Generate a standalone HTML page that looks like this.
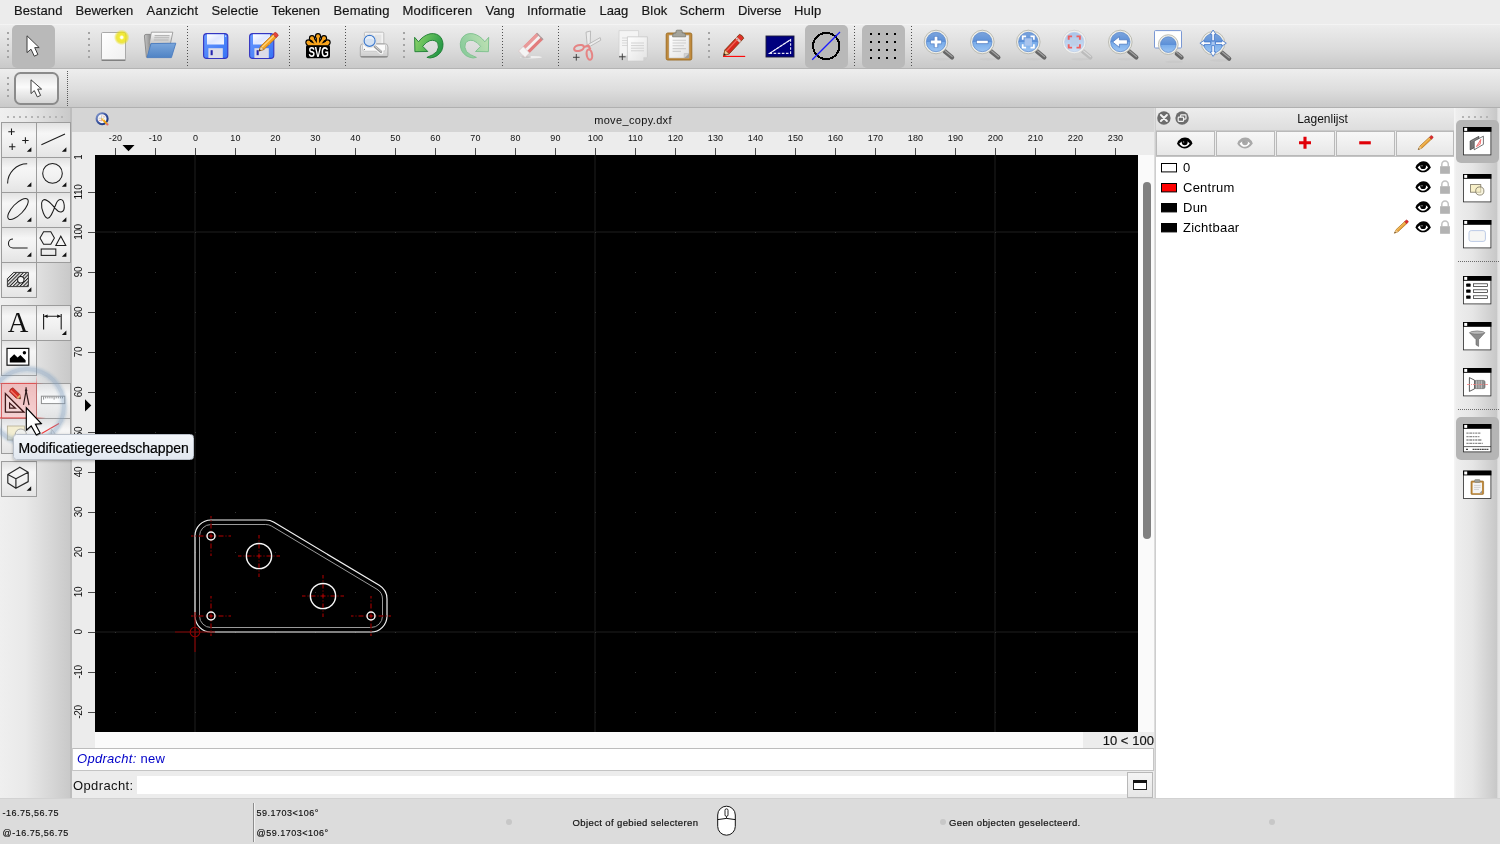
<!DOCTYPE html>
<html>
<head>
<meta charset="utf-8">
<title>move_copy.dxf</title>
<style>
*{box-sizing:border-box;margin:0;padding:0}
html,body{width:1500px;height:844px;overflow:hidden;background:#ececec;font-family:"Liberation Sans",sans-serif;color:#000}
#app{position:relative;width:1500px;height:844px;overflow:hidden;will-change:transform}
#app *{position:absolute}
#app i,#app b{font-style:normal;font-weight:normal}
/* menu */
#menubar{left:0;top:0;width:1500px;height:24px;background:#ececec}
#menubar span{top:2px;font-size:13px;line-height:17px;white-space:nowrap;color:#161616;-webkit-text-stroke:.18px #161616}
/* toolbars */
#tb1{left:0;top:24px;width:1500px;height:45px;background:linear-gradient(#f7f7f7 0,#ececec 1.5px,#dcdcdc 55%,#c9c9c9 100%);border-bottom:1px solid #b4b4b4}
#tb2{left:0;top:69px;width:1500px;height:39px;background:linear-gradient(#eeeeee 0,#dddddd 55%,#c9c9c9 100%);border-bottom:1px solid #b0b0b0}
.hd{width:2px;height:2px;background:#a4a4a4}
.vsep{width:1px;background-image:linear-gradient(#5a5a5a 50%,rgba(0,0,0,0) 50%);background-size:1px 2px}

.vsep3{width:1px;background-image:linear-gradient(#4e4e4e 33.4%,rgba(0,0,0,0) 33.4%);background-size:1px 3px}
.sel{background:#b9b9b9;border-radius:5px}
/* left tools */
#left{left:0;top:108px;width:72px;height:690px;background:linear-gradient(90deg,#efefef 0%,#e9e9e9 35%,#c9c9c9 70px,#bdbdbd 70.5px,#bdbdbd 100%)}
.tbtn{width:36px;height:36px;background:linear-gradient(#e2e2e2 0%,#f6f6f6 30%,#f0f0f0 60%,#e4e4e4 100%);border:1px solid #9c9c9c}
/* main */
#tabbar{left:72px;top:108px;width:1082px;height:24px;background:#d5d5d5}
#tabtitle{left:0;width:1122px;top:5px;text-align:center;font-size:11px;line-height:14px;color:#111;letter-spacing:.35px}
#hruler{left:72px;top:132px;width:1082px;height:23px;background:#ececec;overflow:hidden}
#vruler{left:72px;top:155px;width:23px;height:593px;background:#ececec;overflow:hidden}
.ht{width:1px;height:7px;top:16px;background:#4a4a4a}
.hl{width:41px;text-align:center;top:0;font-size:9px;line-height:12px;color:#111;letter-spacing:.2px}
.vt{height:1px;width:7px;left:16px;background:#4a4a4a}
.vl{left:-13.8px;width:41px;height:12px;text-align:center;font-size:10px;line-height:12px;color:#111;transform:rotate(-90deg);transform-origin:50% 50%;letter-spacing:-.4px}
#canvas{left:95px;top:155px;width:1043px;height:577px;background:#000;overflow:hidden}
#vscroll{left:1138px;top:155px;width:16px;height:577px;background:#fafafa}
#hscroll{left:95px;top:732px;width:1059px;height:16px;background:#fafafa}
#zoomlbl{left:1083px;top:732px;width:71px;height:16px;background:#ececec;font-size:13px;line-height:16px;text-align:right;padding-right:0;padding-top:.8px;color:#111;letter-spacing:.05px;-webkit-text-stroke:.15px #111}
#cmdhist{left:72px;top:748px;width:1082px;height:23px;background:#fff;border-top:1px solid #bcbcbc;border-bottom:1px solid #c4c4c4;border-left:1px solid #d0d0d0;border-right:1px solid #c6c6c6}
#cmdhist span{left:4px;top:1.6px;font-size:13px;line-height:16px;color:#0000c8;white-space:nowrap;letter-spacing:.28px}
#cmdhist i{font-style:italic!important;position:static!important}
#cmdrow{left:72px;top:771px;width:1082px;height:27px;background:#ececec}
#cmdlabel{left:1px;top:6.7px;font-size:13px;line-height:16px;color:#111;letter-spacing:.38px}
#cmdinput{left:65px;top:5px;width:990px;height:18px;background:#fff}
#cmdbtn{left:1055px;top:1px;width:26px;height:26px;border:1px solid #b8b8b8;background:linear-gradient(#f4f4f4,#e6e6e6)}
#status{left:0;top:798px;width:1500px;height:46px;background:#dcdcdc;border-top:1px solid #d2d2d2}
#status .sc{font-size:9px;line-height:12px;color:#111;white-space:nowrap;letter-spacing:.5px;-webkit-text-stroke:.15px #111}
#status .st{font-size:9.5px;line-height:12px;color:#111;white-space:nowrap;letter-spacing:.375px;-webkit-text-stroke:.18px #111}
#splitv{left:1154px;top:108px;width:2px;height:690px;background:linear-gradient(90deg,#e4e4e4,#c6c6c6)}
#right{left:1156px;top:156px;width:298px;height:642px;background:#fff;border-top:1px solid #c4c4c4}
#rhead{left:1156px;top:108px;width:298px;height:23px;background:linear-gradient(#ededed,#dedede);border-bottom:1px solid #c9c9c9}
#rhead span{left:0;width:333px;text-align:center;top:4.2px;font-size:12px;line-height:15px;color:#111;letter-spacing:0}
.lbtn{top:131px;height:25px;border:1px solid #b9b9b9;background:linear-gradient(#f7f7f7,#e7e7e7)}
.lname{left:1183px;font-size:13px;line-height:16px;color:#000;white-space:nowrap;letter-spacing:.25px}
.hsep{height:1px;background-image:linear-gradient(90deg,#6a6a6a 50%,rgba(0,0,0,0) 50%);background-size:2px 1px}
#rtool{left:1454px;top:108px;width:46px;height:690px;background:linear-gradient(90deg,#f4f4f4 0,#f4f4f4 1px,#eeeeee 2px,#e6e6e6 40%,#c8c8c8 42.5px,#e2e2e2 44px,#e6e6e6 100%)}
</style>
</head>
<body>
<div id="app">

<!-- MENUBAR -->
<div id="menubar">
<span style="left:14px;letter-spacing:0.11px">Bestand</span>
<span style="left:75.5px;letter-spacing:0px">Bewerken</span>
<span style="left:146.5px;letter-spacing:0.26px">Aanzicht</span>
<span style="left:211.5px;letter-spacing:0.09px">Selectie</span>
<span style="left:271.5px;letter-spacing:-0.1px">Tekenen</span>
<span style="left:333.5px;letter-spacing:0.14px">Bemating</span>
<span style="left:402.5px;letter-spacing:0.25px">Modificeren</span>
<span style="left:485.5px;letter-spacing:-0.05px">Vang</span>
<span style="left:527px;letter-spacing:0.12px">Informatie</span>
<span style="left:599.5px;letter-spacing:-0.05px">Laag</span>
<span style="left:641.5px;letter-spacing:0.17px">Blok</span>
<span style="left:679.5px;letter-spacing:0.12px">Scherm</span>
<span style="left:738px;letter-spacing:-0.08px">Diverse</span>
<span style="left:794px;letter-spacing:0.17px">Hulp</span>
</div>

<!-- TOOLBARS -->
<div id="tb1"></div><div id="tb2"></div>
<div class="sel" style="left:12px;top:25px;width:43px;height:43px"></div>
<div class="sel" style="left:805px;top:25px;width:43px;height:43px"></div>
<div class="sel" style="left:862px;top:25px;width:43px;height:43px"></div>
<i class="hd" style="left:7px;top:32px"></i>
<i class="hd" style="left:7px;top:38px"></i>
<i class="hd" style="left:7px;top:44px"></i>
<i class="hd" style="left:7px;top:50px"></i>
<i class="hd" style="left:7px;top:56px"></i>
<i class="hd" style="left:88px;top:32px"></i>
<i class="hd" style="left:88px;top:38px"></i>
<i class="hd" style="left:88px;top:44px"></i>
<i class="hd" style="left:88px;top:50px"></i>
<i class="hd" style="left:88px;top:56px"></i>
<i class="hd" style="left:403px;top:32px"></i>
<i class="hd" style="left:403px;top:38px"></i>
<i class="hd" style="left:403px;top:44px"></i>
<i class="hd" style="left:403px;top:50px"></i>
<i class="hd" style="left:403px;top:56px"></i>
<i class="hd" style="left:708px;top:32px"></i>
<i class="hd" style="left:708px;top:38px"></i>
<i class="hd" style="left:708px;top:44px"></i>
<i class="hd" style="left:708px;top:50px"></i>
<i class="hd" style="left:708px;top:56px"></i>
<i class="hd" style="left:7px;top:77px"></i>
<i class="hd" style="left:7px;top:83px"></i>
<i class="hd" style="left:7px;top:89px"></i>
<i class="hd" style="left:7px;top:95px"></i>
<i class="vsep3" style="left:187px;top:26px;height:41px"></i>
<i class="vsep3" style="left:289px;top:26px;height:41px"></i>
<i class="vsep3" style="left:345px;top:26px;height:41px"></i>
<i class="vsep3" style="left:502px;top:26px;height:41px"></i>
<i class="vsep3" style="left:558px;top:26px;height:41px"></i>
<i class="vsep3" style="left:854px;top:26px;height:41px"></i>
<i class="vsep3" style="left:911px;top:26px;height:41px"></i>
<i class="vsep" style="left:67px;top:71px;height:35px"></i>
<div style="left:14px;top:72px;width:45px;height:33px;border:2px solid #8b8b8b;border-radius:6.5px;background:linear-gradient(#e4e4e4 0%,#fbfbfb 45%,#efefef 60%,#d6d6d6 100%)"></div>
<svg id="tbsvg" width="1500" height="84" viewBox="0 24 1500 84" style="left:0;top:24px"><defs>
<linearGradient id="gPaper" x1="0" y1="0" x2="1" y2="1"><stop offset="0" stop-color="#ffffff"/><stop offset="1" stop-color="#f0f0f0"/></linearGradient>
<radialGradient id="gGlow"><stop offset="0" stop-color="#ffffff"/><stop offset=".14" stop-color="#fffff0"/><stop offset=".32" stop-color="#f4ec34"/><stop offset=".66" stop-color="#eae018" stop-opacity=".8"/><stop offset="1" stop-color="#e4da00" stop-opacity="0"/></radialGradient>
<linearGradient id="gFback" x1="0" y1="0" x2="1" y2="0"><stop offset="0" stop-color="#c6c6c6"/><stop offset="1" stop-color="#868686"/></linearGradient><linearGradient id="gFpap" x1="0" y1="0" x2="0" y2="1"><stop offset="0" stop-color="#ffffff"/><stop offset=".35" stop-color="#e8e8e8"/><stop offset="1" stop-color="#c4c4c4"/></linearGradient><linearGradient id="gFold" x1="0" y1="0" x2="0" y2="1"><stop offset="0" stop-color="#7ba7dc"/><stop offset="1" stop-color="#4f83c4"/></linearGradient>
<linearGradient id="gSave" x1="0" y1="0" x2="1" y2="1"><stop offset="0" stop-color="#6a9aff"/><stop offset="1" stop-color="#3672f4"/></linearGradient>
<linearGradient id="gLbl" x1="0" y1="0" x2="1" y2="1"><stop offset="0" stop-color="#ffffff"/><stop offset=".5" stop-color="#dfe7ff"/><stop offset="1" stop-color="#f4f6ff"/></linearGradient>
<linearGradient id="gLens" x1="0" y1="0" x2="0" y2="1"><stop offset="0" stop-color="#7ba4dc"/><stop offset=".5" stop-color="#5c90d8"/><stop offset=".52" stop-color="#78acea"/><stop offset="1" stop-color="#9cc4f2"/></linearGradient>
<linearGradient id="gLensP" x1="0" y1="0" x2="0" y2="1"><stop offset="0" stop-color="#a9c3e8"/><stop offset="1" stop-color="#cfe0f5"/></linearGradient>
<linearGradient id="gUndo" x1="0" y1="0" x2="1" y2=".4"><stop offset="0" stop-color="#93d46c"/><stop offset=".5" stop-color="#5cba58"/><stop offset="1" stop-color="#2a9a48"/></linearGradient>
<linearGradient id="gRedo" x1="0" y1="0" x2="1" y2=".4"><stop offset="0" stop-color="#c2e2b4"/><stop offset=".5" stop-color="#a8d8aa"/><stop offset="1" stop-color="#8ccc9c"/></linearGradient>
<linearGradient id="gPrn" x1="0" y1="0" x2="0" y2="1"><stop offset="0" stop-color="#f4f4f4"/><stop offset="1" stop-color="#c9c9c9"/></linearGradient>
<linearGradient id="gClip" x1="0" y1="0" x2="1" y2="1"><stop offset="0" stop-color="#ffffff"/><stop offset="1" stop-color="#e2e2e2"/></linearGradient>
</defs><path d="M27 35.8V52.6L31 49.2L34.3 56.2L37.9 54.5L34.7 47.6H39.2Z" fill="#fff" stroke="#3c3c3c" stroke-width="1" stroke-linejoin="round"/><path d="M31 79.8V93.6L34.3 90.6L37.3 96.9L40.6 95.4L37.7 89.1H41.6Z" fill="#fff" stroke="#3c3c3c" stroke-width="1" stroke-linejoin="round"/><rect x="101.5" y="32.5" width="24" height="27.5" rx="1.2" fill="url(#gPaper)" stroke="#a9a9a9"/><path d="M101.6 60.3H125.4" stroke="#7e7e7e" stroke-width="1.3"/><circle cx="121.7" cy="37.4" r="7.8" fill="url(#gGlow)"/><path d="M144.4 36Q144.4 34.4 146 34.4H150.4L151.4 35.6V55.6L146.4 57.2Z" fill="url(#gFback)" stroke="#7c7c7c" stroke-width=".8"/><path d="M151.4 32.2H172.8L170.4 44H149.2Z" fill="url(#gFpap)" stroke="#8e8e8e" stroke-width=".8"/><path d="M154.6 35.6H169.6M154.2 37.8H169.2M153.8 40H168.6" stroke="#b4b4b4" stroke-width="1.1"/><path d="M151 43.6L175.8 43.2L171.4 57.6H147Z" fill="url(#gFold)" stroke="#4a7cbf" stroke-width=".9" stroke-linejoin="round"/><rect x="203.6" y="33.6" width="24.2" height="24.8" rx="3.2" fill="url(#gSave)" stroke="#3434c0" stroke-width="1.1"/><rect x="207" y="34.3" width="17" height="10.2" fill="url(#gLbl)"/><rect x="208.4" y="48.2" width="14.4" height="9.8" fill="#dcdce8"/><rect x="210.6" y="50.2" width="2.1" height="5" fill="#2424b0"/><rect x="225" y="35.5" width="1.2" height="1.2" fill="#dfe6ff"/><rect x="249.6" y="33.6" width="24.2" height="24.8" rx="3.2" fill="url(#gSave)" stroke="#3434c0" stroke-width="1.1"/><rect x="253" y="34.3" width="17" height="10.2" fill="url(#gLbl)"/><rect x="254.4" y="48.2" width="14.4" height="9.8" fill="#dcdce8"/><rect x="256.6" y="50.2" width="2.1" height="5" fill="#2424b0"/><rect x="271" y="35.5" width="1.2" height="1.2" fill="#dfe6ff"/><g transform="translate(259 51) rotate(-44)"><path d="M0 0L4.6 -2.3H21.6V2.3H4.6Z" fill="#f6a623" stroke="#b86a10" stroke-width=".7"/><path d="M21.6 -2.3H24.6Q25.8 0 24.6 2.3H21.6Z" fill="#e8443a" stroke="#a8241c" stroke-width=".6"/><path d="M0 0L4.6 -2.3V2.3Z" fill="#f3d7a8" stroke="#8a5a20" stroke-width=".5"/><path d="M0 0L1.8 -.9V.9Z" fill="#222"/><path d="M4.6 -0.7H21.6" stroke="#ffd98a" stroke-width="1.1"/></g><g><path d="M318 47L308.4 42.4M318 47L312 38.2M318 47L318 36.2M318 47L324 38.2M318 47L327.6 42.4" stroke="#000" stroke-width="4.6" stroke-linecap="round" fill="none"/><circle cx="308.4" cy="42.4" r="3.1" fill="#000"/><circle cx="312" cy="38.2" r="3.1" fill="#000"/><circle cx="318" cy="36.2" r="3.1" fill="#000"/><circle cx="324" cy="38.2" r="3.1" fill="#000"/><circle cx="327.6" cy="42.4" r="3.1" fill="#000"/><path d="M318 47L308.4 42.4M318 47L312 38.2M318 47L318 36.2M318 47L324 38.2M318 47L327.6 42.4" stroke="#f7a41d" stroke-width="2.3" stroke-linecap="round" fill="none"/><circle cx="308.4" cy="42.4" r="1.95" fill="#f7a41d"/><circle cx="312" cy="38.2" r="1.95" fill="#f7a41d"/><circle cx="318" cy="36.2" r="1.95" fill="#f7a41d"/><circle cx="324" cy="38.2" r="1.95" fill="#f7a41d"/><circle cx="327.6" cy="42.4" r="1.95" fill="#f7a41d"/><rect x="306" y="44.6" width="24" height="13.7" rx="2.6" fill="#000"/><path d="M307.6 44.4H328.4" stroke="#f7a41d" stroke-width="1.6"/><text x="318.6" y="56.5" font-family="Liberation Sans" font-weight="bold" font-size="14.4" text-anchor="middle" fill="#fff" textLength="20.4" lengthAdjust="spacingAndGlyphs">SVG</text></g><g><path d="M364.4 45V33.4Q364.4 32.2 365.6 32.2H382.6Q383.8 32.2 383.8 33.4V45Z" fill="#f3f3f3" stroke="#b4b4b4" stroke-width=".8"/><path d="M375 34.6H381.4V43.4H375Z" fill="#e4e4e4"/><path d="M360.3 47Q360.3 43.6 363.6 43.6H384.6Q387.9 43.6 387.9 47V55.4Q387.9 57.4 385.8 57.4H362.4Q360.3 57.4 360.3 55.4Z" fill="url(#gPrn)" stroke="#9c9c9c" stroke-width=".8"/><path d="M362.6 45.4Q362.6 44.4 363.6 44.4H384.6Q385.6 44.4 385.6 45.4V49.2Q385.6 51.2 383.6 51.2H364.6Q362.6 51.2 362.6 49.2Z" fill="#fbfbfb" stroke="#b9b9b9" stroke-width=".7"/><circle cx="364.4" cy="49.4" r=".6" fill="#777"/><path d="M360.8 56.6H387.4" stroke="#8c8c8c" stroke-width="1.2"/><path d="M374.4 46.2L381.2 52" stroke="#fafafa" stroke-width="4.4" stroke-linecap="round"/><path d="M374.8 46.6L380.9 51.8" stroke="#9a9a9a" stroke-width="2.6" stroke-linecap="round"/><path d="M375.2 46.4L381 51.4" stroke="#d2d2d2" stroke-width="1" stroke-linecap="round"/><circle cx="369.6" cy="40.9" r="6.9" fill="#f4f4f2" stroke="#cfcfcf" stroke-width=".5"/><circle cx="369.6" cy="40.9" r="5.5" fill="#d3e1f2" stroke="#3f7acc" stroke-width="1.2"/><path d="M364.8 40.2Q369.6 37.4 374.4 40.2Q373.8 36 369.6 35.9Q365.4 36 364.8 40.2Z" fill="#eaf1fa" opacity=".85"/></g><path d="M414.6 37.3L418.5 41.8Q423 35.6 430 33.8Q437 32.6 441 37.6Q444.6 43.4 441.8 50.4Q438.4 57 430.2 58L426.9 57.4Q433.6 55 436.8 51.6Q439.6 47 437.7 43Q435.4 39.6 430 40.6Q426 42 422.7 46.3L427.8 51.5L414.9 51.7Z" fill="url(#gUndo)" stroke="#1d7d32" stroke-width=".9" stroke-linejoin="round"/><g transform="translate(903.3 0) scale(-1 1)"><path d="M414.6 37.3L418.5 41.8Q423 35.6 430 33.8Q437 32.6 441 37.6Q444.6 43.4 441.8 50.4Q438.4 57 430.2 58L426.9 57.4Q433.6 55 436.8 51.6Q439.6 47 437.7 43Q435.4 39.6 430 40.6Q426 42 422.7 46.3L427.8 51.5L414.9 51.7Z" fill="url(#gRedo)" stroke="#7cc08c" stroke-width=".9" stroke-linejoin="round"/></g><ellipse cx="531" cy="57.2" rx="11" ry="1.3" fill="#f6f6f6" opacity=".8"/><ellipse cx="526" cy="57" rx="5" ry="1" fill="#b4b4b4" opacity=".7"/><g transform="translate(521.8 54.3) rotate(-44.7)"><rect x="0" y="-4.6" width="26" height="9.2" rx=".8" fill="#e27c7c"/><rect x="0" y="-4.6" width="26" height="3.2" fill="#e99a9a"/><rect x="0" y="-1.5" width="26" height="2.9" fill="#f3f1f1"/><rect x="24.8" y="-4.6" width="1.2" height="9.2" fill="#a8a0a0"/><rect x="0" y="-4.6" width="6.4" height="9.2" fill="#f4f4f4" stroke="#d4d0d0" stroke-width=".6"/></g><g fill="none"><path d="M586 32.2L590.6 31L590.2 44.6L587.4 47.2Z" fill="#ececec" stroke="#b0b0b0" stroke-width=".8"/><path d="M600.2 37.6L600.8 40.2L589.6 46.6L588.2 44.4Z" fill="#ececec" stroke="#b0b0b0" stroke-width=".8"/><path d="M584 47L588.4 45.6L590.4 49.4" stroke="#e58484" stroke-width="2.2" stroke-linejoin="round"/><ellipse cx="579" cy="48" rx="5" ry="2.8" transform="rotate(-16 579 48)" stroke="#e58484" stroke-width="2.1"/><ellipse cx="589.4" cy="54.6" rx="2.7" ry="5.2" transform="rotate(-10 589.4 54.6)" stroke="#e58484" stroke-width="2.1"/><path d="M573 57.3H579.6M576.3 54V60.6" stroke="#3c3c3c" stroke-width=".95"/></g><g><path d="M619 30.6H638.6V56H619Z" fill="#f4f4f4" stroke="#d2d2d2" stroke-width=".8"/><path d="M622 38H630M622 40.5H630M622 43H630M622 45.5H630" stroke="#d9d9d9" stroke-width="1"/><path d="M627.4 36.8H647.4V57.2L643.4 61.2H627.4Z" fill="url(#gClip)" stroke="#c6c6c6" stroke-width=".8"/><path d="M631 43H644M631 45.6H644M631 48.2H644M631 50.8H644" stroke="#d2d2d2" stroke-width="1"/><path d="M647.4 57.2H643.4V61.2Z" fill="#cfcfcf"/><path d="M619 56.8H625.6M622.3 53.5V60.1" stroke="#3c3c3c" stroke-width=".95"/></g><g><rect x="666.2" y="33" width="25.6" height="27" rx="1.6" fill="#c08a3c" stroke="#9a6a20" stroke-width=".9"/><path d="M669 35.2H689V58H669Z" fill="url(#gClip)" stroke="#b8b8b8" stroke-width=".5"/><path d="M672.6 40.2H686M672.6 43H686M672.6 45.8H684M672.6 48.6H686M672.6 51.4H681" stroke="#cdcdcd" stroke-width="1.1"/><path d="M689 53.6V58H684.2Z" fill="#9e9e9e"/><path d="M684.2 58V53.6H689Z" fill="#d4d4d4" stroke="#a8a8a8" stroke-width=".4"/><path d="M672.6 35.6Q672.6 33 675 33H676V31.2Q676 30.2 677.2 30.2H681Q682.2 30.2 682.2 31.2V33H683.2Q685.6 33 685.6 35.6V36.8H672.6Z" fill="#a4a49c" stroke="#78786e" stroke-width=".8"/></g><g transform="translate(723.6 55.6) rotate(-47)"><path d="M0 0L5.2 -2.9H22V2.9H5.2Z" fill="#d9281e" stroke="#7a3a10" stroke-width=".8"/><path d="M22 -2.9H26.4Q28 0 26.4 2.9H22Z" fill="#e0322a" stroke="#7a3a10" stroke-width=".8"/><rect x="20.4" y="-2.9" width="2.2" height="5.8" fill="#d9c8c8"/><path d="M0 0L5.2 -2.9V2.9Z" fill="#f0c890" stroke="#7a3a10" stroke-width=".6"/><path d="M0 0L2.2 -1.2V1.2Z" fill="#222"/><path d="M5.2 -1H22" stroke="#f06a5a" stroke-width="1.3"/></g><path d="M723 56.4H745.2" stroke="#f00" stroke-width="1.1"/><rect x="766" y="36" width="28" height="21" fill="#00007e" stroke="#1c1c3a" stroke-width=".9"/><path d="M769.6 53.4L790.6 39.6V53.4Z" fill="none" stroke="#e4e4f4" stroke-width="1.1" stroke-dasharray="2.6 1.5"/><path d="M769.6 53.4L790.6 39.6" stroke="#f4f4ff" stroke-width="1.1"/><circle cx="826.2" cy="46" r="13.1" fill="none" stroke="#000" stroke-width="2.1" shape-rendering="crispEdges"/><path d="M812.2 59.8L840 32" stroke="#1a1aff" stroke-width="1.3"/><rect x="870" y="33" width="2" height="2" fill="#000"/><rect x="870" y="41" width="2" height="2" fill="#000"/><rect x="870" y="49" width="2" height="2" fill="#000"/><rect x="870" y="57" width="2" height="2" fill="#000"/><rect x="878" y="33" width="2" height="2" fill="#000"/><rect x="878" y="41" width="2" height="2" fill="#000"/><rect x="878" y="49" width="2" height="2" fill="#000"/><rect x="878" y="57" width="2" height="2" fill="#000"/><rect x="886" y="33" width="2" height="2" fill="#000"/><rect x="886" y="41" width="2" height="2" fill="#000"/><rect x="886" y="49" width="2" height="2" fill="#000"/><rect x="886" y="57" width="2" height="2" fill="#000"/><rect x="894" y="33" width="2" height="2" fill="#000"/><rect x="894" y="41" width="2" height="2" fill="#000"/><rect x="894" y="49" width="2" height="2" fill="#000"/><rect x="894" y="57" width="2" height="2" fill="#000"/><ellipse cx="942" cy="59.2" rx="9" ry="1.3" fill="#a8a8a8" opacity=".14"/><path d="M944.6 51.2L952 57.4" stroke="#666666" stroke-width="4.4" stroke-linecap="round"/><path d="M945.4 51L952.2 56.6" stroke="#a2a2a2" stroke-width="1.2" stroke-linecap="round"/><circle cx="936" cy="42" r="11.799999999999999" fill="#efefe9" stroke="#aeaea4" stroke-width=".8"/><circle cx="936" cy="42" r="9.7" fill="url(#gLens)" stroke="#5584cc" stroke-width=".7"/><path d="M930.4 42H941.6M936 36.4V47.6" stroke="#4a78c0" stroke-width="4.4"/><path d="M930.8 42H941.2M936 36.8V47.2" stroke="#fff" stroke-width="2.8"/><ellipse cx="988.3" cy="59.2" rx="9" ry="1.3" fill="#a8a8a8" opacity=".14"/><path d="M990.9 51.2L998.3 57.4" stroke="#666666" stroke-width="4.4" stroke-linecap="round"/><path d="M991.6999999999999 51L998.5 56.6" stroke="#a2a2a2" stroke-width="1.2" stroke-linecap="round"/><circle cx="982.3" cy="42" r="11.799999999999999" fill="#efefe9" stroke="#aeaea4" stroke-width=".8"/><circle cx="982.3" cy="42" r="9.7" fill="url(#gLens)" stroke="#5584cc" stroke-width=".7"/><path d="M976.3 42H988.3" stroke="#4a78c0" stroke-width="4.2"/><path d="M976.8 42H987.8" stroke="#fff" stroke-width="2.6"/><ellipse cx="1034.3" cy="59.2" rx="9" ry="1.3" fill="#a8a8a8" opacity=".14"/><path d="M1036.8999999999999 51.2L1044.3 57.4" stroke="#666666" stroke-width="4.4" stroke-linecap="round"/><path d="M1037.7 51L1044.5 56.6" stroke="#a2a2a2" stroke-width="1.2" stroke-linecap="round"/><circle cx="1028.3" cy="42" r="11.799999999999999" fill="#efefe9" stroke="#aeaea4" stroke-width=".8"/><circle cx="1028.3" cy="42" r="9.7" fill="url(#gLens)" stroke="#5584cc" stroke-width=".7"/><rect x="1024.6" y="38.3" width="7.4" height="7.4" fill="#a8c4ee"/><path d="M1022.6999999999999 39.8V36.4H1026.1M1022.6999999999999 44.2V47.6H1026.1M1033.8999999999999 39.8V36.4H1030.5M1033.8999999999999 44.2V47.6H1030.5" fill="none" stroke="#fff" stroke-width="1.7"/><ellipse cx="1080.3" cy="59.2" rx="9" ry="1.3" fill="#a8a8a8" opacity=".14"/><path d="M1082.8999999999999 51.2L1090.3 57.4" stroke="#bcbcbc" stroke-width="4.4" stroke-linecap="round"/><path d="M1083.7 51L1090.5 56.6" stroke="#dadada" stroke-width="1.2" stroke-linecap="round"/><circle cx="1074.3" cy="42" r="11.799999999999999" fill="#f0f0ee" stroke="#d2d2d0" stroke-width=".8"/><circle cx="1074.3" cy="42" r="9.7" fill="url(#gLensP)" stroke="#b9cce6" stroke-width=".7"/><rect x="1070.6" y="38.3" width="7.4" height="7.4" fill="#bccfe8"/><path d="M1068.7 39.8V36.4H1072.1M1068.7 44.2V47.6H1072.1M1079.8999999999999 39.8V36.4H1076.5M1079.8999999999999 44.2V47.6H1076.5" fill="none" stroke="#ee6060" stroke-width="1.9"/><ellipse cx="1126.3" cy="59.2" rx="9" ry="1.3" fill="#a8a8a8" opacity=".14"/><path d="M1128.8999999999999 51.2L1136.3 57.4" stroke="#666666" stroke-width="4.4" stroke-linecap="round"/><path d="M1129.7 51L1136.5 56.6" stroke="#a2a2a2" stroke-width="1.2" stroke-linecap="round"/><circle cx="1120.3" cy="42" r="11.799999999999999" fill="#efefe9" stroke="#aeaea4" stroke-width=".8"/><circle cx="1120.3" cy="42" r="9.7" fill="url(#gLens)" stroke="#5584cc" stroke-width=".7"/><path d="M1112.6 42L1119.4 36.6V39.8H1127.4V44.2H1119.4V47.4Z" fill="#fff" stroke="#4a78c0" stroke-width=".8"/><rect x="1154.5" y="30.6" width="27" height="17.4" rx="1" fill="#fff" stroke="#7a98d4" stroke-width="1"/><ellipse cx="1174.3" cy="61.8" rx="9" ry="1.3" fill="#a8a8a8" opacity=".14"/><path d="M1176.8999999999999 53.8L1181.5 57.400000000000006" stroke="#666666" stroke-width="4.4" stroke-linecap="round"/><path d="M1176.5 52.2L1181.7 56.60000000000001" stroke="#a2a2a2" stroke-width="1.2" stroke-linecap="round"/><circle cx="1168.3" cy="44.6" r="9.9" fill="#efefe9" stroke="#aeaea4" stroke-width=".8"/><circle cx="1168.3" cy="44.6" r="7.8" fill="url(#gLens)" stroke="#5584cc" stroke-width=".7"/><ellipse cx="1219.1" cy="60.400000000000006" rx="9" ry="1.3" fill="#a8a8a8" opacity=".14"/><path d="M1221.6999999999998 52.400000000000006L1229.1 58.6" stroke="#666666" stroke-width="4.4" stroke-linecap="round"/><path d="M1222.5 52.2L1229.3 57.800000000000004" stroke="#a2a2a2" stroke-width="1.2" stroke-linecap="round"/><circle cx="1213.1" cy="43.2" r="11.7" fill="#efefe9" stroke="#aeaea4" stroke-width=".8"/><circle cx="1213.1" cy="43.2" r="9.6" fill="url(#gLens)" stroke="#5584cc" stroke-width=".7"/><rect x="1211.5" y="41.6" width="3.2" height="3.2" fill="#a9c7f0"/><path transform="rotate(0 1213.1 43.2)" d="M1211.85 40.800000000000004V34.400000000000006H1210.1999999999998L1213.1 30.000000000000004L1216.0 34.400000000000006H1214.35V40.800000000000004Z" fill="#fff" stroke="#3f74c8" stroke-width=".8" stroke-linejoin="round"/><path transform="rotate(90 1213.1 43.2)" d="M1211.85 40.800000000000004V34.400000000000006H1210.1999999999998L1213.1 30.000000000000004L1216.0 34.400000000000006H1214.35V40.800000000000004Z" fill="#fff" stroke="#3f74c8" stroke-width=".8" stroke-linejoin="round"/><path transform="rotate(180 1213.1 43.2)" d="M1211.85 40.800000000000004V34.400000000000006H1210.1999999999998L1213.1 30.000000000000004L1216.0 34.400000000000006H1214.35V40.800000000000004Z" fill="#fff" stroke="#3f74c8" stroke-width=".8" stroke-linejoin="round"/><path transform="rotate(270 1213.1 43.2)" d="M1211.85 40.800000000000004V34.400000000000006H1210.1999999999998L1213.1 30.000000000000004L1216.0 34.400000000000006H1214.35V40.800000000000004Z" fill="#fff" stroke="#3f74c8" stroke-width=".8" stroke-linejoin="round"/></svg>

<!-- LEFT TOOLS -->
<div id="left"></div>
<i class="hd" style="left:7px;top:116px;background:#b4b4b4"></i>
<i class="hd" style="left:13px;top:116px;background:#b4b4b4"></i>
<i class="hd" style="left:19px;top:116px;background:#b4b4b4"></i>
<i class="hd" style="left:25px;top:116px;background:#b4b4b4"></i>
<i class="hd" style="left:31px;top:116px;background:#b4b4b4"></i>
<i class="hd" style="left:37px;top:116px;background:#b4b4b4"></i>
<i class="hd" style="left:43px;top:116px;background:#b4b4b4"></i>
<i class="hd" style="left:49px;top:116px;background:#b4b4b4"></i>
<i class="hd" style="left:55px;top:116px;background:#b4b4b4"></i>
<i class="hd" style="left:61px;top:116px;background:#b4b4b4"></i>
<div class="tbtn" style="left:1px;top:122px;"></div>
<div class="tbtn" style="left:36px;top:122px;width:35px;"></div>
<div class="tbtn" style="left:1px;top:157px;"></div>
<div class="tbtn" style="left:36px;top:157px;width:35px;"></div>
<div class="tbtn" style="left:1px;top:192px;"></div>
<div class="tbtn" style="left:36px;top:192px;width:35px;"></div>
<div class="tbtn" style="left:1px;top:227px;"></div>
<div class="tbtn" style="left:36px;top:227px;width:35px;"></div>
<div class="tbtn" style="left:1px;top:262px;"></div>
<div class="tbtn" style="left:1px;top:305px;"></div>
<div class="tbtn" style="left:36px;top:305px;width:35px;"></div>
<div class="tbtn" style="left:1px;top:340px;"></div>
<div class="tbtn" style="left:1px;top:383px;background:linear-gradient(#f1bcbc,#f7d2d2);border:1.6px solid #d85c5c;box-shadow:0 0 2px rgba(230,60,60,.4)"></div>
<div class="tbtn" style="left:36px;top:383px;width:35px;"></div>
<div class="tbtn" style="left:1px;top:418px;"></div>
<div class="tbtn" style="left:36px;top:418px;width:35px;"></div>
<div class="tbtn" style="left:1px;top:461px;"></div>
<svg width="72" height="400" viewBox="0 108 72 400" style="left:0;top:108px"><g fill="none" stroke="#1c1c1c" stroke-width="1.05"><path d="M8.3 131.8H14.7M11.5 128.60000000000002V135.0"/><path d="M22.2 140.4H28.599999999999998M25.4 137.20000000000002V143.6"/><path d="M9.0 146.8H15.399999999999999M12.2 143.60000000000002V150.0"/><path d="M31.4 151.8H26.799999999999997L31.4 147.20000000000002Z" fill="#111" stroke="none"/><path d="M41.4 144.8L65 134"/><path d="M66.4 151.8H61.800000000000004L66.4 147.20000000000002Z" fill="#111" stroke="none"/><path d="M7.6 183.4A19.6 19.6 0 0 1 27.2 163.8"/><path d="M31.4 186.8H26.799999999999997L31.4 182.20000000000002Z" fill="#111" stroke="none"/><circle cx="52.5" cy="173.4" r="9.8"/><path d="M66.4 186.8H61.800000000000004L66.4 182.20000000000002Z" fill="#111" stroke="none"/><ellipse cx="18" cy="209" rx="13.6" ry="5.4" transform="rotate(-46 18 209)"/><path d="M31.4 221.8H26.799999999999997L31.4 217.20000000000002Z" fill="#111" stroke="none"/><path d="M41.6 203C43 195 51 203 55.4 208.6C60 214 65 213 64.2 205C63.4 197.6 58.4 198 56 204C53 211.6 50.6 218.6 47.6 218.2C44.6 217.8 41 209 41.6 203Z"/><path d="M66.4 221.8H61.800000000000004L66.4 217.20000000000002Z" fill="#111" stroke="none"/><path d="M13 238.9A4.55 4.55 0 0 0 13 248H27.6"/><path d="M31.4 256.8H26.799999999999997L31.4 252.20000000000002Z" fill="#111" stroke="none"/><polygon points="54.4,238.0 50.8,244.2 43.6,244.2 40.0,238.0 43.6,231.8 50.8,231.8"/><path d="M55.8 245.4L60.8 236.2L65.8 245.4Z"/><rect x="41.2" y="249" width="14.6" height="6.4"/><path d="M66.4 256.8H61.800000000000004L66.4 252.20000000000002Z" fill="#111" stroke="none"/><defs><pattern id="hat" width="2.4" height="2.4" patternUnits="userSpaceOnUse" patternTransform="rotate(-45)"><rect width="2.4" height=".5" y="0" fill="#707070"/></pattern></defs><path d="M13.6 272.4H28.4V286.6H7.4V278.6Z" fill="url(#hat)" stroke="#2a2a2a" stroke-width=".9"/><circle cx="20.8" cy="279.8" r="3.2" fill="#f4f4f4" stroke="#222"/><path d="M31.4 291.8H26.799999999999997L31.4 287.2Z" fill="#111" stroke="none"/><text x="18" y="331.6" font-family="Liberation Serif" font-size="28.5" text-anchor="middle" fill="#111" stroke="none">A</text><path d="M43.6 329.6V314M61.2 329.6V314M44.4 316.2H60.4" stroke-width="1.1"/><path d="M43.9 316.2L47.6 314.4V318ZM60.9 316.2L57.2 314.4V318Z" fill="#111" stroke="none"/><path d="M66.4 335H61.800000000000004L66.4 330.4Z" fill="#111" stroke="none"/><rect x="7" y="348.4" width="21.8" height="16.8" fill="#fff" stroke="#111" stroke-width="1.2"/><path d="M9.8 362.6V358.6L14.2 354.2L17.6 357.6L20.4 355L25.6 360.2V362.6Z" fill="#000" stroke="none"/><circle cx="24.4" cy="352.7" r="1.7" fill="#000" stroke="none"/><path d="M5.4 393.6V412.2H24Z" stroke="#3a1010" stroke-width="1.3" fill="#f6d6d6"/><path d="M9.6 403V408.2H15.4Z" stroke="#3a1010" stroke-width="1.2"/><g transform="translate(20.6 398.8) rotate(-136)" stroke="none"><path d="M0 0L3.6 -2.6H13.2Q14.8 0 13.2 2.6H3.6Z" fill="#d8261c" stroke="#7a1c14" stroke-width=".6"/><path d="M0 0L3.6 -2.6V2.6Z" fill="#eab070"/><path d="M0 0L1.6 -1.1V1.1Z" fill="#222"/><path d="M3.6 -.8H12.8" stroke="#f47a6a" stroke-width="1.1"/></g><path d="M26.1 387.2V391M26.1 390.6L23.5 404.8M26.1 390.6L29 405.2" stroke="#2a1414" stroke-width="1.2"/><circle cx="26.1" cy="390.4" r="1.2" fill="#2a1414" stroke="none"/><rect x="41.4" y="396.2" width="23.4" height="7.4" fill="#ffffff" stroke="#8c8c8c" stroke-width="1"/><path d="M43.6 396.6V399.6M45.7 396.6V398.4M47.8 396.6V398.4M49.9 396.6V398.4M52.0 396.6V398.4M54.1 396.6V399.6M56.2 396.6V398.4M58.3 396.6V398.4M60.4 396.6V398.4M62.5 396.6V398.4" stroke="#6e6e6e" stroke-width=".8"/><rect x="7.4" y="426" width="17" height="14" fill="#f7f0d0" stroke="#b8b094" stroke-width=".9"/><circle cx="20.8" cy="434.6" r="5.6" fill="#f4f4f0" stroke="#a4a4a0" stroke-width=".9"/><path d="M41.6 433.4L59 423.6" stroke="#f03030" stroke-width="1.1"/><path d="M51.2 428.6L56.6 436H51.2Z" stroke="#bdbdbd" stroke-width=".9"/><path d="M7.8 474.5L19.8 467.2L28.2 472.2V481.6L15.9 488.3L7.8 483.1ZM7.8 474.5L15.9 478.7L28.2 472.2M15.9 478.7V488.3" stroke="#2a2a2a" stroke-width="1.2" stroke-linejoin="round"/><path d="M31.2 490.8H26.6L31.2 486.2Z" fill="#111" stroke="none"/></g></svg>

<!-- MAIN -->
<div id="tabbar"><span id="tabtitle">move_copy.dxf</span><svg width="18" height="18" viewBox="93 110 18 18" style="left:21px;top:2px"><defs><linearGradient id="gQ" x1="0" y1="0" x2="1" y2="1"><stop offset="0" stop-color="#8ea2d2"/><stop offset=".45" stop-color="#3a55a0"/><stop offset="1" stop-color="#182f78"/></linearGradient></defs><circle cx="102.1" cy="118.7" r="5.5" fill="#f6f6f6" stroke="url(#gQ)" stroke-width="2.1"/><path d="M98.6 118.2H101.6M101.6 115.4V121.4M103.2 117H105.4" stroke="#b4b4b4" stroke-width=".7"/><path d="M98.8 120.4H101.8M103 115.6L104 116.6" stroke="#e88" stroke-width=".7"/><path d="M102.4 119L106.6 123.6" stroke="#f2a416" stroke-width="2" stroke-linecap="round"/><path d="M102.6 118.6L103.6 119.6" stroke="#ffe9a8" stroke-width="1.2" stroke-linecap="round"/><circle cx="107.4" cy="124.4" r="1.15" fill="#e46a6a"/></svg></div>
<div id="hruler"><i class="ht" style="left:43px"></i><b class="hl" style="left:23px">-20</b><i class="ht" style="left:83px"></i><b class="hl" style="left:63px">-10</b><i class="ht" style="left:123px"></i><b class="hl" style="left:103px">0</b><i class="ht" style="left:163px"></i><b class="hl" style="left:143px">10</b><i class="ht" style="left:203px"></i><b class="hl" style="left:183px">20</b><i class="ht" style="left:243px"></i><b class="hl" style="left:223px">30</b><i class="ht" style="left:283px"></i><b class="hl" style="left:263px">40</b><i class="ht" style="left:323px"></i><b class="hl" style="left:303px">50</b><i class="ht" style="left:363px"></i><b class="hl" style="left:343px">60</b><i class="ht" style="left:403px"></i><b class="hl" style="left:383px">70</b><i class="ht" style="left:443px"></i><b class="hl" style="left:423px">80</b><i class="ht" style="left:483px"></i><b class="hl" style="left:463px">90</b><i class="ht" style="left:523px"></i><b class="hl" style="left:503px">100</b><i class="ht" style="left:563px"></i><b class="hl" style="left:543px">110</b><i class="ht" style="left:603px"></i><b class="hl" style="left:583px">120</b><i class="ht" style="left:643px"></i><b class="hl" style="left:623px">130</b><i class="ht" style="left:683px"></i><b class="hl" style="left:663px">140</b><i class="ht" style="left:723px"></i><b class="hl" style="left:703px">150</b><i class="ht" style="left:763px"></i><b class="hl" style="left:743px">160</b><i class="ht" style="left:803px"></i><b class="hl" style="left:783px">170</b><i class="ht" style="left:843px"></i><b class="hl" style="left:823px">180</b><i class="ht" style="left:883px"></i><b class="hl" style="left:863px">190</b><i class="ht" style="left:923px"></i><b class="hl" style="left:903px">200</b><i class="ht" style="left:963px"></i><b class="hl" style="left:943px">210</b><i class="ht" style="left:1003px"></i><b class="hl" style="left:983px">220</b><i class="ht" style="left:1043px"></i><b class="hl" style="left:1023px">230</b><svg style="left:50px;top:13px" width="13" height="7" viewBox="0 0 13 7"><path d="M0.5 0H12.5L6.5 6.3Z" fill="#000"/></svg></div>
<div id="vruler"><i class="vt" style="top:557px"></i><b class="vl" style="top:551px">-20</b><i class="vt" style="top:517px"></i><b class="vl" style="top:511px">-10</b><i class="vt" style="top:477px"></i><b class="vl" style="top:471px">0</b><i class="vt" style="top:437px"></i><b class="vl" style="top:431px">10</b><i class="vt" style="top:397px"></i><b class="vl" style="top:391px">20</b><i class="vt" style="top:357px"></i><b class="vl" style="top:351px">30</b><i class="vt" style="top:317px"></i><b class="vl" style="top:311px">40</b><i class="vt" style="top:277px"></i><b class="vl" style="top:271px">50</b><i class="vt" style="top:237px"></i><b class="vl" style="top:231px">60</b><i class="vt" style="top:197px"></i><b class="vl" style="top:191px">70</b><i class="vt" style="top:157px"></i><b class="vl" style="top:151px">80</b><i class="vt" style="top:117px"></i><b class="vl" style="top:111px">90</b><i class="vt" style="top:77px"></i><b class="vl" style="top:71px">100</b><i class="vt" style="top:37px"></i><b class="vl" style="top:31px">110</b><i class="vt" style="top:-3px"></i><b class="vl" style="top:-9px">120</b><svg style="left:13px;top:243.6px" width="7" height="14" viewBox="0 0 7 14"><path d="M0 .2V12.6L6.3 6.4Z" fill="#000"/></svg></div>
<div id="canvas"><svg width="1043" height="577" viewBox="0 0 1043 577" style="left:0;top:0"><defs><pattern id="gd" x="20" y="37" width="40" height="40" patternUnits="userSpaceOnUse"><rect x="0" y="0" width="1" height="1" fill="#333"/></pattern></defs><rect x="99" y="0" width="2" height="577" fill="#0f0f0f"/><rect x="499" y="0" width="2" height="577" fill="#0f0f0f"/><rect x="899" y="0" width="2" height="577" fill="#0f0f0f"/><rect x="0" y="76" width="1043" height="2" fill="#0f0f0f"/><rect x="0" y="476" width="1043" height="2" fill="#0f0f0f"/><rect x="0" y="0" width="1043" height="577" fill="url(#gd)"/><path d="M100.00 461.00A16.00 16.00 0 0 0 116.00 477.00L276.00 477.00A16.00 16.00 0 0 0 292.00 461.00L292.00 444.06A16.00 16.00 0 0 0 284.23 430.34L179.00 367.28A16.00 16.00 0 0 0 170.77 365.00L116.00 365.00A16.00 16.00 0 0 0 100.00 381.00Z" fill="none" stroke="#f2f2f2" stroke-width="1.2"/><path d="M104.50 461.00A11.50 11.50 0 0 0 116.00 472.50L276.00 472.50A11.50 11.50 0 0 0 287.50 461.00L287.50 444.06A11.50 11.50 0 0 0 281.91 434.20L176.68 371.14A11.50 11.50 0 0 0 170.77 369.50L116.00 369.50A11.50 11.50 0 0 0 104.50 381.00Z" fill="none" stroke="#a2a2a2" stroke-width="0.95"/><path d="M96.0 381.0H136.0M116.0 361.0V401.0" stroke="#7a0000" stroke-width="1.5" stroke-dasharray="5 2 1 2" stroke-dashoffset="2.5" fill="none"/><rect x="115.0" y="380.0" width="2" height="2" fill="#900000"/><path d="M96.0 461.0H136.0M116.0 441.0V481.0" stroke="#7a0000" stroke-width="1.5" stroke-dasharray="5 2 1 2" stroke-dashoffset="2.5" fill="none"/><rect x="115.0" y="460.0" width="2" height="2" fill="#900000"/><path d="M256.0 461.0H296.0M276.0 441.0V481.0" stroke="#7a0000" stroke-width="1.5" stroke-dasharray="5 2 1 2" stroke-dashoffset="2.5" fill="none"/><rect x="275.0" y="460.0" width="2" height="2" fill="#900000"/><path d="M143.0 401.0H185.0M164.0 380.0V422.0" stroke="#7a0000" stroke-width="1.5" stroke-dasharray="5 2 1 2" stroke-dashoffset="1.5" fill="none"/><rect x="163.0" y="400.0" width="2" height="2" fill="#900000"/><path d="M207.0 441.0H249.0M228.0 420.0V462.0" stroke="#7a0000" stroke-width="1.5" stroke-dasharray="5 2 1 2" stroke-dashoffset="1.5" fill="none"/><rect x="227.0" y="440.0" width="2" height="2" fill="#900000"/><circle cx="116.0" cy="381.0" r="4" fill="none" stroke="#f6f6f6" stroke-width="1.45"/><circle cx="116.0" cy="461.0" r="4" fill="none" stroke="#f6f6f6" stroke-width="1.45"/><circle cx="276.0" cy="461.0" r="4" fill="none" stroke="#f6f6f6" stroke-width="1.45"/><circle cx="164.0" cy="401.0" r="12.6" fill="none" stroke="#f6f6f6" stroke-width="1.45"/><circle cx="228.0" cy="441.0" r="12.6" fill="none" stroke="#f6f6f6" stroke-width="1.45"/><path d="M80.0 477.0H120.0M100.0 457.0V497.0" stroke="#840000" stroke-width="1.2" fill="none"/><circle cx="100.0" cy="477.0" r="4.8" fill="none" stroke="#8e0000" stroke-width="1.1"/></svg></div>
<div id="vscroll"><div style="left:5.1px;top:27.3px;width:7.7px;height:357px;border-radius:4px;background:#808080"></div></div>
<div id="hscroll"></div><div id="zoomlbl">10 &lt; 100</div>
<div id="cmdhist"><span><i>Opdracht:</i> new</span></div>
<div id="cmdrow"><span id="cmdlabel">Opdracht:</span><div id="cmdinput"></div><div id="cmdbtn"><svg width="14" height="10" viewBox="0 0 14 10" style="left:5px;top:6.5px"><rect x="0.5" y="0.5" width="13" height="9" fill="#fff" stroke="#222" stroke-width="1"/><rect x="0" y="0" width="14" height="3" fill="#111"/></svg></div></div>

<!-- RIGHT PANEL -->
<div id="splitv"></div>
<div id="right"></div>
<div id="rhead"><span>Lagenlijst</span></div>
<svg width="40" height="16" viewBox="0 0 40 16" style="left:1156px;top:110px"><circle cx="7.9" cy="8" r="6.7" fill="#6c6c6c"/><path d="M4.9 5L10.9 11M10.9 5L4.9 11" stroke="#f2f2f2" stroke-width="2" stroke-linecap="round"/><circle cx="26.1" cy="8" r="6.7" fill="#6c6c6c"/><rect x="24.6" y="4.9" width="5.4" height="4.2" rx=".8" fill="none" stroke="#f2f2f2" stroke-width="1.2"/><rect x="22.2" y="7.2" width="5.4" height="4.2" rx=".8" fill="#6c6c6c" stroke="#f2f2f2" stroke-width="1.2"/></svg>
<div class="lbtn" style="left:1156px;width:59px"></div>
<div class="lbtn" style="left:1216px;width:59px"></div>
<div class="lbtn" style="left:1276px;width:59px"></div>
<div class="lbtn" style="left:1336px;width:59px"></div>
<div class="lbtn" style="left:1396px;width:58px"></div>
<svg width="299" height="140" viewBox="1156 108 299 140" style="left:1156px;top:108px"><g transform="translate(1184.7 142.8)"><path d="M-7.7 .9Q-6.6 -2.6 -3.4 -4.5Q.2 -6.1 3.8 -4.6Q6.8 -2.6 7.8 .8Q6 3.6 3.2 5Q0 6.2 -3.2 5Q-6.4 3.4 -7.7 .9Z" fill="#000"/><path d="M-5.4 .6Q-3.4 -1.9 -.2 -1.9Q3 -1.9 5 .5Q3.2 3.9 -.2 4Q-3.4 3.9 -5.4 .6Z" fill="#fff"/><circle cx="0" cy="-.5" r="2.9" fill="#000"/><circle cx="-1.1" cy="-.9" r=".7" fill="#9a9a9a"/></g><g transform="translate(1245 142.8)"><path d="M-7.7 .9Q-6.6 -2.6 -3.4 -4.5Q.2 -6.1 3.8 -4.6Q6.8 -2.6 7.8 .8Q6 3.6 3.2 5Q0 6.2 -3.2 5Q-6.4 3.4 -7.7 .9Z" fill="#a9a9a9"/><path d="M-5.4 .6Q-3.4 -1.9 -.2 -1.9Q3 -1.9 5 .5Q3.2 3.9 -.2 4Q-3.4 3.9 -5.4 .6Z" fill="#fff"/><circle cx="0" cy="-.5" r="2.9" fill="#a9a9a9"/><circle cx="-1.1" cy="-.9" r=".7" fill="#9a9a9a"/></g><path d="M1299 142.8H1311M1305 136.8V148.8" stroke="#e00008" stroke-width="3.1"/><path d="M1359.2 142.8H1370.8" stroke="#e00008" stroke-width="3.1"/><g transform="translate(1418.2 149.6) rotate(-42.9)"><path d="M0 0L3.6 -1.45H16.7V1.45H3.6Z" fill="#e9a23a" stroke="#a86a18" stroke-width=".6"/><path d="M16.7 -1.45H19.1Q20.1 0 19.1 1.45H16.7Z" fill="#e02a2a" stroke="#a82020" stroke-width=".5"/><path d="M0 0L3.6 -1.45V1.45Z" fill="#e8c890"/><path d="M0 0L1.4 -.7V.7Z" fill="#3a2a1a"/><path d="M3.6 -.5H16.7" stroke="#f6c86a" stroke-width=".8"/></g><rect x="1161.5" y="163.5" width="15" height="8.4" fill="#fff" stroke="#000" stroke-width="1"/><g transform="translate(1423.1 166.7)"><path d="M-7.7 .9Q-6.6 -2.6 -3.4 -4.5Q.2 -6.1 3.8 -4.6Q6.8 -2.6 7.8 .8Q6 3.6 3.2 5Q0 6.2 -3.2 5Q-6.4 3.4 -7.7 .9Z" fill="#000"/><path d="M-5.4 .6Q-3.4 -1.9 -.2 -1.9Q3 -1.9 5 .5Q3.2 3.9 -.2 4Q-3.4 3.9 -5.4 .6Z" fill="#fff"/><circle cx="0" cy="-.5" r="2.9" fill="#000"/><circle cx="-1.1" cy="-.9" r=".7" fill="#9a9a9a"/></g><path d="M1441.8 166.5V164.4A3.25 3.5 0 0 1 1448.3 164.4V166.5" fill="none" stroke="#c2c2c2" stroke-width="1.5"/><rect x="1440.1" y="166.2" width="9.8" height="7.6" fill="#b3b3b3"/><rect x="1161.5" y="183.5" width="15" height="8.4" fill="#f00" stroke="#000" stroke-width="1"/><g transform="translate(1423.1 186.7)"><path d="M-7.7 .9Q-6.6 -2.6 -3.4 -4.5Q.2 -6.1 3.8 -4.6Q6.8 -2.6 7.8 .8Q6 3.6 3.2 5Q0 6.2 -3.2 5Q-6.4 3.4 -7.7 .9Z" fill="#000"/><path d="M-5.4 .6Q-3.4 -1.9 -.2 -1.9Q3 -1.9 5 .5Q3.2 3.9 -.2 4Q-3.4 3.9 -5.4 .6Z" fill="#fff"/><circle cx="0" cy="-.5" r="2.9" fill="#000"/><circle cx="-1.1" cy="-.9" r=".7" fill="#9a9a9a"/></g><path d="M1441.8 186.5V184.4A3.25 3.5 0 0 1 1448.3 184.4V186.5" fill="none" stroke="#c2c2c2" stroke-width="1.5"/><rect x="1440.1" y="186.2" width="9.8" height="7.6" fill="#b3b3b3"/><rect x="1161.5" y="203.5" width="15" height="8.4" fill="#000" stroke="#000" stroke-width="1"/><g transform="translate(1423.1 206.7)"><path d="M-7.7 .9Q-6.6 -2.6 -3.4 -4.5Q.2 -6.1 3.8 -4.6Q6.8 -2.6 7.8 .8Q6 3.6 3.2 5Q0 6.2 -3.2 5Q-6.4 3.4 -7.7 .9Z" fill="#000"/><path d="M-5.4 .6Q-3.4 -1.9 -.2 -1.9Q3 -1.9 5 .5Q3.2 3.9 -.2 4Q-3.4 3.9 -5.4 .6Z" fill="#fff"/><circle cx="0" cy="-.5" r="2.9" fill="#000"/><circle cx="-1.1" cy="-.9" r=".7" fill="#9a9a9a"/></g><path d="M1441.8 206.5V204.4A3.25 3.5 0 0 1 1448.3 204.4V206.5" fill="none" stroke="#c2c2c2" stroke-width="1.5"/><rect x="1440.1" y="206.2" width="9.8" height="7.6" fill="#b3b3b3"/><rect x="1161.5" y="223.5" width="15" height="8.4" fill="#000" stroke="#000" stroke-width="1"/><g transform="translate(1423.1 226.7)"><path d="M-7.7 .9Q-6.6 -2.6 -3.4 -4.5Q.2 -6.1 3.8 -4.6Q6.8 -2.6 7.8 .8Q6 3.6 3.2 5Q0 6.2 -3.2 5Q-6.4 3.4 -7.7 .9Z" fill="#000"/><path d="M-5.4 .6Q-3.4 -1.9 -.2 -1.9Q3 -1.9 5 .5Q3.2 3.9 -.2 4Q-3.4 3.9 -5.4 .6Z" fill="#fff"/><circle cx="0" cy="-.5" r="2.9" fill="#000"/><circle cx="-1.1" cy="-.9" r=".7" fill="#9a9a9a"/></g><path d="M1441.8 226.5V224.4A3.25 3.5 0 0 1 1448.3 224.4V226.5" fill="none" stroke="#c2c2c2" stroke-width="1.5"/><rect x="1440.1" y="226.2" width="9.8" height="7.6" fill="#b3b3b3"/><g transform="translate(1394.4 233.2) rotate(-43.2)"><path d="M0 0L3.6 -1.45H15.4V1.45H3.6Z" fill="#e9a23a" stroke="#a86a18" stroke-width=".6"/><path d="M15.4 -1.45H17.8Q18.8 0 17.8 1.45H15.4Z" fill="#e02a2a" stroke="#a82020" stroke-width=".5"/><path d="M0 0L3.6 -1.45V1.45Z" fill="#e8c890"/><path d="M0 0L1.4 -.7V.7Z" fill="#3a2a1a"/><path d="M3.6 -.5H15.4" stroke="#f6c86a" stroke-width=".8"/></g></svg>
<span class="lname" style="top:159.7px">0</span>
<span class="lname" style="top:179.7px">Centrum</span>
<span class="lname" style="top:199.7px">Dun</span>
<span class="lname" style="top:219.7px">Zichtbaar</span>

<!-- RIGHT TOOLBAR -->
<div id="rtool"></div>
<div class="sel" style="left:1456px;top:120px;width:43px;height:43px;background:#b5b5b5"></div>
<div class="sel" style="left:1456px;top:417px;width:43px;height:43px;background:#b5b5b5"></div>
<i class="hd" style="left:1462px;top:116px;background:#b4b4b4"></i>
<i class="hd" style="left:1468px;top:116px;background:#b4b4b4"></i>
<i class="hd" style="left:1474px;top:116px;background:#b4b4b4"></i>
<i class="hd" style="left:1480px;top:116px;background:#b4b4b4"></i>
<i class="hd" style="left:1486px;top:116px;background:#b4b4b4"></i>
<i class="hsep" style="left:1458px;top:261px;width:42px"></i>
<i class="hsep" style="left:1458px;top:409px;width:42px"></i>
<svg width="46" height="400" viewBox="1454 108 46 400" style="left:1454px;top:108px"><rect x="1463.5" y="127.5" width="27.4" height="27.4" fill="#fff" stroke="#2a2a2a" stroke-width=".8"/><rect x="1463" y="127" width="28.4" height="4.8" fill="#000"/><rect x="1464.2" y="127.9" width="3" height="3" fill="#fff"/><rect x="1463.5" y="174.5" width="27.4" height="27.4" fill="#fff" stroke="#2a2a2a" stroke-width=".8"/><rect x="1463" y="174" width="28.4" height="4.8" fill="#000"/><rect x="1464.2" y="174.9" width="3" height="3" fill="#fff"/><rect x="1463.5" y="220.5" width="27.4" height="27.4" fill="#fff" stroke="#2a2a2a" stroke-width=".8"/><rect x="1463" y="220" width="28.4" height="4.8" fill="#000"/><rect x="1464.2" y="220.9" width="3" height="3" fill="#fff"/><rect x="1463.5" y="276.5" width="27.4" height="27.4" fill="#fff" stroke="#2a2a2a" stroke-width=".8"/><rect x="1463" y="276" width="28.4" height="4.8" fill="#000"/><rect x="1464.2" y="276.9" width="3" height="3" fill="#fff"/><rect x="1463.5" y="322.5" width="27.4" height="27.4" fill="#fff" stroke="#2a2a2a" stroke-width=".8"/><rect x="1463" y="322" width="28.4" height="4.8" fill="#000"/><rect x="1464.2" y="322.9" width="3" height="3" fill="#fff"/><rect x="1463.5" y="368.5" width="27.4" height="27.4" fill="#fff" stroke="#2a2a2a" stroke-width=".8"/><rect x="1463" y="368" width="28.4" height="4.8" fill="#000"/><rect x="1464.2" y="368.9" width="3" height="3" fill="#fff"/><rect x="1463.5" y="424.5" width="27.4" height="27.4" fill="#fff" stroke="#2a2a2a" stroke-width=".8"/><rect x="1463" y="424" width="28.4" height="4.8" fill="#000"/><rect x="1464.2" y="424.9" width="3" height="3" fill="#fff"/><rect x="1463.5" y="471.1" width="27.4" height="27.4" fill="#fff" stroke="#2a2a2a" stroke-width=".8"/><rect x="1463" y="470.6" width="28.4" height="4.8" fill="#000"/><rect x="1464.2" y="471.5" width="3" height="3" fill="#fff"/><path d="M1470.2 141L1478.8 136.4V145.2L1470.2 149.8Z" fill="#8a8a8a" stroke="#2c2c2c" stroke-width=".7"/><path d="M1471.6 141.6V148.6M1472.9 141V148" stroke="#5a5a5a" stroke-width=".6"/><path d="M1474.2 141L1483.4 136.2V144.4L1474.2 149.8Z" fill="#fff" stroke="#3a3a3a" stroke-width=".7"/><path d="M1476.4 146.6L1480.8 139.4L1480.2 144.2Z" fill="#fbd0d0" stroke="#f05858" stroke-width=".8" stroke-linejoin="round"/><rect x="1470.4" y="184.6" width="10.4" height="7.6" fill="#f8f0c8" stroke="#7a7460" stroke-width=".8"/><circle cx="1479.8" cy="191" r="4.1" fill="#f4ecc4" stroke="#7a7460" stroke-width=".8" fill-opacity=".55"/><rect x="1469" y="230.6" width="16.4" height="10.8" rx="2.2" fill="#f6f6f4" stroke="#bccbe6" stroke-width="1"/><rect x="1466.2" y="283.6" width="4.4" height="3.2" rx=".6" fill="#000"/><rect x="1473.6" y="283.8" width="14" height="2.8" fill="#fff" stroke="#222" stroke-width=".7"/><rect x="1466.2" y="289.6" width="4.4" height="3.2" rx=".6" fill="#000"/><rect x="1473.6" y="289.8" width="14" height="2.8" fill="#fff" stroke="#222" stroke-width=".7"/><rect x="1466.2" y="295.6" width="4.4" height="3.2" rx=".6" fill="#000"/><rect x="1473.6" y="295.8" width="14" height="2.8" fill="#fff" stroke="#222" stroke-width=".7"/><path d="M1469.6 332.8Q1477.2 329.6 1484.8 332.8L1478.6 339.6V346.4L1476 344.8V339.6Z" fill="#8c8c8c" stroke="#5e5e5e" stroke-width=".6"/><ellipse cx="1477.2" cy="332.6" rx="7.4" ry="1.5" fill="#bcbcbc" stroke="#666" stroke-width=".5"/><path d="M1469.4 377.6L1474.6 380.2V388.8L1469.4 391.4Z" fill="#fff" stroke="#333" stroke-width=".8"/><rect x="1474.6" y="380.4" width="10.4" height="8.2" rx="1.6" fill="#8e8e8e" stroke="#555" stroke-width=".6"/><path d="M1476.6 380.6V388.4M1479 380.6V388.4M1481.4 380.6V388.4" stroke="#c4c4c4" stroke-width=".9"/><path d="M1467 384.5H1488" stroke="#f08080" stroke-width=".8" stroke-dasharray="3 1 1 1"/><path d="M1466.4 433.2H1480.4" stroke="#8a8a8a" stroke-width="1.3" stroke-dasharray="2.2 .7 3 .6 1.6 .7"/><path d="M1466.4 436.59999999999997H1479.4" stroke="#8a8a8a" stroke-width="1.3" stroke-dasharray="2.2 .7 3 .6 1.6 .7"/><path d="M1466.4 440.0H1482.0" stroke="#8a8a8a" stroke-width="1.3" stroke-dasharray="2.2 .7 3 .6 1.6 .7"/><path d="M1466.4 443.4H1482.8000000000002" stroke="#8a8a8a" stroke-width="1.3" stroke-dasharray="2.2 .7 3 .6 1.6 .7"/><path d="M1464 446.6H1491" stroke="#222" stroke-width=".7"/><path d="M1466 449.4H1468.4M1472.6 449.4H1488.8" stroke="#444" stroke-width="1.3" stroke-dasharray="2 .5 1.6 .5"/><rect x="1471" y="481" width="12.6" height="13.4" rx=".9" fill="#c08a3c" stroke="#94641c" stroke-width=".6"/><rect x="1472.6" y="482.6" width="9.4" height="10.6" fill="#f4f4f4"/><path d="M1474 485.4H1480.6M1474 487.4H1480.6M1474 489.4H1479" stroke="#c8c8c8" stroke-width=".8"/><rect x="1474.6" y="479.6" width="5.4" height="2.8" rx=".8" fill="#a0a098" stroke="#77776c" stroke-width=".5"/><path d="M1482 490.4V493.2H1479.4Z" fill="#999"/></svg>

<!-- STATUS -->
<div id="status">
<span class="sc" style="left:2.5px;top:7.5px">-16.75,56.75</span><span class="sc" style="left:2.5px;top:27.6px">@-16.75,56.75</span>
<i style="left:253px;top:4px;width:1px;height:39px;background:#8c8c8c"></i><i style="left:254px;top:4px;width:1px;height:39px;background:#f2f2f2"></i>
<span class="sc" style="left:256.5px;top:7.5px">59.1703&lt;106°</span><span class="sc" style="left:256.5px;top:27.6px">@59.1703&lt;106°</span>
<i style="left:506.3px;top:20px;width:6px;height:6px;border-radius:50%;background:#c7c7c7"></i>
<i style="left:940px;top:20px;width:6px;height:6px;border-radius:50%;background:#c7c7c7"></i>
<i style="left:1269px;top:20px;width:6px;height:6px;border-radius:50%;background:#c7c7c7"></i>
<span class="st" style="left:572.6px;top:17.6px">Object of gebied selecteren</span>
<svg width="22" height="34" viewBox="0 0 22 34" style="left:715px;top:4px"><rect x="2.7" y="3.2" width="17.6" height="29" rx="8.8" fill="#fff" stroke="#111" stroke-width="1"/><path d="M2.7 16.6Q11.5 14.2 20.3 16.6" fill="none" stroke="#111" stroke-width="1"/><rect x="10" y="5.8" width="3" height="7.6" rx="1.5" fill="#fff" stroke="#111" stroke-width=".9"/><path d="M11.5 13.4V15.4" stroke="#111" stroke-width=".9"/></svg>
<span class="st" style="left:949px;top:17.6px">Geen objecten geselecteerd.</span>
</div>

<!-- OVERLAY -->
<div style="left:-12px;top:366.5px;width:78px;height:78px;border-radius:50%;border:4px solid rgba(128,158,190,.40);background:radial-gradient(circle,rgba(200,218,236,.02) 0%,rgba(186,208,230,.07) 70%,rgba(160,188,216,.18) 100%);box-shadow:0 0 2px 1.5px rgba(134,164,196,.30),inset 0 0 2.5px 1.5px rgba(134,164,196,.30)"></div>
<i style="left:0;top:382.5px;width:44px;height:1.6px;background:linear-gradient(90deg,rgba(226,70,70,.5) 0%,rgba(226,70,70,.45) 78%,rgba(226,70,70,0) 100%)"></i>
<i style="left:0;top:417.2px;width:46px;height:1.6px;background:linear-gradient(90deg,rgba(222,64,64,.55) 0%,rgba(222,64,64,.5) 78%,rgba(222,64,64,0) 100%)"></i>
<i style="left:35.7px;top:375px;width:1.6px;height:51px;background:linear-gradient(rgba(226,70,70,0) 0%,rgba(226,70,70,.5) 18%,rgba(226,70,70,.5) 84%,rgba(226,70,70,0) 100%)"></i>
<div id="tip" style="left:13px;top:434.2px;width:180.6px;height:25.6px;border:1px solid #b9c0ca;border-radius:3.5px;background:linear-gradient(#f3f6fa,#e2e8f0);box-shadow:0 1px 3px rgba(0,0,0,.28)"><span style="left:4.4px;top:4.7px;font-size:14px;line-height:16px;letter-spacing:-.03px;color:#000;white-space:nowrap;-webkit-text-stroke:.2px #000">Modificatiegereedschappen</span></div>
<svg width="24" height="34" viewBox="0 0 24 34" style="left:22px;top:404px"><path d="M4.3 3.8V26.2L9.2 21.9L14.3 31L18.1 28.9L13.4 20.2L19.3 19.5Z" fill="#000" opacity=".22" transform="translate(.8 1.4)"/><path d="M4.3 3.8V26.2L9.2 21.9L14.3 31L18.1 28.9L13.4 20.2L19.3 19.5Z" fill="#fff" stroke="#000" stroke-width="1.15" stroke-linejoin="miter"/></svg>

</div>
</body>
</html>
